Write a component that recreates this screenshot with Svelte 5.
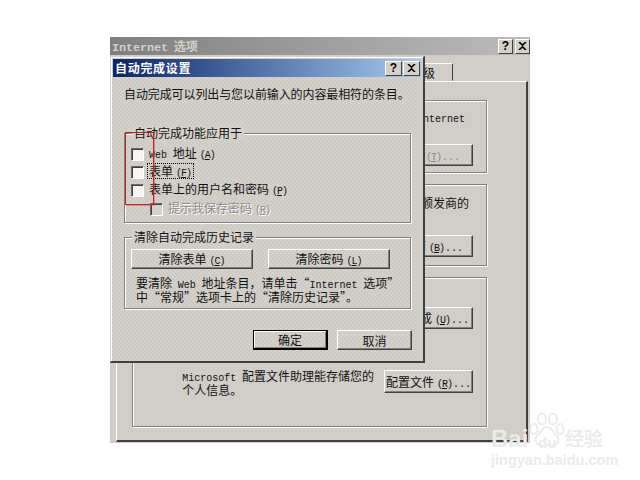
<script>
  // small title-bar button glyph is drawn inline; everything else is plain markup
  const rows = [
    { latin: "Web", text: " 地址", key: "A" },
    { text: "表单", key: "F", focused: true },
    { text: "表单上的用户名和密码", key: "P" }
  ];
</script>

<div class="stage">
  <!-- back window: Internet options -->
  <section class="win back">
    <header class="back-title">
      <span class="back-name"><span class="m-title">Internet</span> 选项</span>
      <div class="caps back-caps">
        <span class="cap">?</span>
        <span class="cap"><svg width="9" height="8" viewBox="0 0 9 8"><path d="M1 0l3.500 3.200L8 0M1 8l3.500-3.200L8 8" fill="none" stroke="#000" stroke-width="1.600"/></svg></span>
      </div>
    </header>
    <div class="tabs"><span class="tab">级</span></div>
    <div class="panel">
      <div class="group g1">
        <p class="t1"><span class="m">nternet</span></p>
        <button class="btn side off" type="button"><span class="k">(<u>T</u>)</span><span class="m">...</span></button>
      </div>
      <div class="group g2">
        <p class="t2">颁发商的</p>
        <button class="btn side bb" type="button">面<span class="k">(<u>B</u>)</span><span class="m">...</span></button>
      </div>
      <div class="group g3">
        <button class="btn side ub" type="button">成<span class="k">(<u>U</u>)</span><span class="m">...</span></button>
        <div class="profile">
          <p><span class="m">Microsoft</span> 配置文件助理能存储您的<br />个人信息。</p>
          <button class="btn prof" type="button">配置文件<span class="k">(<u>R</u>)</span><span class="m">...</span></button>
        </div>
      </div>
    </div>
  </section>

  <!-- front dialog -->
  <section class="win dialog">
    <header class="dlg-title">
      <span class="dlg-name">自动完成设置</span>
      <div class="caps dlg-caps">
        <span class="cap">?</span>
        <span class="cap"><svg width="9" height="8" viewBox="0 0 9 8"><path d="M1 0l3.500 3.200L8 0M1 8l3.500-3.200L8 8" fill="none" stroke="#000" stroke-width="1.600"/></svg></span>
      </div>
    </header>
    <p class="desc">自动完成可以列出与您以前输入的内容最相符的条目。</p>

    <div class="box box1">
      <span class="legend">自动完成功能应用于</span>
      {#each rows as row}
        <label class="row">
          <input type="checkbox" />
          <span class:focused={row.focused}>{#if row.latin}<span class="m">{row.latin}</span>{/if}{row.text}<span class="k">(<u>{row.key}</u>)</span></span>
        </label>
      {/each}
      <label class="row indent">
        <input type="checkbox" disabled />
        <span class="disabled">提示我保存密码<span class="k">(<u>R</u>)</span></span>
      </label>
    </div>

    <div class="box box2">
      <span class="legend">清除自动完成历史记录</span>
      <div class="clear-btns">
        <button class="btn" type="button">清除表单<span class="k">(<u>C</u>)</span></button>
        <button class="btn" type="button">清除密码<span class="k">(<u>L</u>)</span></button>
      </div>
      <p class="hint">要清除 <span class="m">Web</span> 地址条目，请单击“<span class="m">Internet</span> 选项”<br />中“常规”选项卡上的“清除历史记录”。</p>
    </div>

    <div class="actions">
      <button class="btn default" type="button">确定</button>
      <button class="btn" type="button">取消</button>
    </div>
  </section>

  <!-- annotation drawn over the shot -->
  <div class="redbox"></div>

  <!-- watermark -->
  <div class="mark">
    <svg class="paw" width="36" height="36" viewBox="0 0 36 36" fill="none" stroke="currentColor" stroke-width="2">
      <ellipse cx="5" cy="17" rx="3.500" ry="5" />
      <ellipse cx="13" cy="7" rx="4" ry="5.500" />
      <ellipse cx="24" cy="7" rx="4" ry="5.500" />
      <ellipse cx="31" cy="17" rx="3.500" ry="5" />
      <path d="M18 15c-4 0-6 4-8 7-3 2-4 5-3 8 1 3 5 4 11 3 6 1 10 0 11-3 1-3 0-6-3-8-2-3-4-7-8-7z" />
    </svg>
    <span class="bai">Bai</span>
    <span class="du">du</span>
    <span class="jy">经验</span>
    <span class="url">jingyan.baidu.com</span>
  </div>
</div>

<style>
  :global(body) {
    background: #fff;
  }
  * {
    box-sizing: border-box;
  }
  p {
    margin: 0;
  }
  .stage {
    position: relative;
    width: 640px;
    height: 480px;
    overflow: hidden;
    background: #fff;
    font-family: "Noto Sans CJK SC", "Liberation Sans", sans-serif;
    font-size: 12px;
    line-height: 13px;
    word-spacing: 3px;
    color: #111;
  }
  .m,
  .k {
    font-family: "Liberation Mono", monospace;
    font-size: 10px;
    line-height: 0.8;
  }
  .k {
    margin-left: 3px;
    margin-right: 1px;
    letter-spacing: -1px;
  }
  .win {
    position: absolute;
    background-color: #d4d1cb;
    background-image:
      radial-gradient(#cdc9c3 0.7px, transparent 0.8px),
      radial-gradient(#cdc9c3 0.7px, transparent 0.8px);
    background-size: 4px 4px;
    background-position: 0 0, 2px 2px;
  }

  /* back window */
  .back {
    left: 110px;
    top: 37px;
    width: 420px;
    height: 406px;
    display: flex;
    flex-direction: column;
  }
  .back-title {
    height: 18px;
    display: flex;
    align-items: center;
    justify-content: space-between;
    padding-left: 2px;
    background: linear-gradient(90deg, #7f7f7f, #bcbcbc);
    color: #d4d0c8;
    font-weight: bold;
  }
  .m-title {
    font-family: "Liberation Mono", monospace;
    font-size: 11.700px;
    line-height: 0.8;
  }
  .caps {
    display: flex;
  }
  .cap {
    display: flex;
    align-items: center;
    justify-content: center;
    background: #d4d0c8;
    border: 1px solid;
    border-color: #fff #404040 #404040 #fff;
    font-family: "Liberation Sans", sans-serif;
    font-size: 12px;
    font-weight: bold;
    color: #000;
  }
  .back-caps {
    gap: 2px;
  }
  .back-caps .cap {
    width: 15px;
    height: 15px;
  }
  .tabs {
    height: 26px;
    display: flex;
    justify-content: flex-end;
    align-items: flex-end;
    padding-right: 77px;
  }
  .tab {
    width: 60px;
    height: 18px;
    padding: 2px 17px 0 0;
    text-align: right;
    border: 1px solid;
    border-color: #fff #404040 transparent #fff;
    border-radius: 2px 2px 0 0;
  }
  .panel {
    margin-left: 6px;
    width: 412px;
    height: 361px;
    display: flex;
    flex-direction: column;
    gap: 11px;
    padding: 18px 39px 13px 15px;
    border: 1px solid;
    border-color: #fff #404040 #404040 #fff;
    border-width: 1px 2px 2px 1px;
  }
  .group {
    display: flex;
    flex-direction: column;
    align-items: flex-end;
    border: 1px solid #808080;
    box-shadow: 1px 1px 0 #fff, inset 1px 1px 0 #fff;
    padding-right: 13px;
  }
  .g1 {
    height: 73px;
    padding-top: 9px;
  }
  .t1 {
    padding-right: 8px;
    margin-bottom: 20px;
  }
  .g2 {
    height: 82px;
    padding-top: 11px;
  }
  .t2 {
    padding-right: 4px;
    margin-bottom: 26px;
  }
  .g3 {
    flex: 1;
    padding-top: 29px;
  }
  .profile {
    margin-top: 41px;
    display: flex;
    gap: 10px;
    align-items: flex-start;
  }
  .profile p {
    margin-top: -1px;
  }
  .btn {
    padding: 0;
    font: inherit;
    color: inherit;
    text-align: center;
    background: transparent;
    border: 1px solid;
    border-color: #fff #404040 #404040 #fff;
    box-shadow: inset -1px -1px 0 #808080;
    white-space: pre;
    word-spacing: inherit;
  }
  .side {
    width: 100px;
    height: 22px;
    text-align: right;
    padding-right: 12px;
  }
  .bb {
    padding-right: 9px;
  }
  .ub {
    padding-right: 3px;
  }
  .off {
    color: #8a8a8a;
  }
  .prof {
    width: 89px;
    height: 23px;
  }

  /* front dialog */
  .dialog {
    left: 110px;
    top: 56px;
    width: 315px;
    height: 307px;
    padding: 2px 2px 0;
    border: 1px solid;
    border-color: #d4d0c8 #404040 #404040 #d4d0c8;
    border-width: 1px 2px 2px 1px;
    box-shadow: inset 1px 1px 0 #fff;
  }
  .dlg-title {
    height: 18px;
    display: flex;
    align-items: center;
    justify-content: space-between;
    padding: 0 1px 0 2px;
    background: linear-gradient(90deg, #0a246a, #a6caf0);
    color: #fff;
    font-weight: bold;
  }
  .dlg-name {
    margin-bottom: 2px;
    letter-spacing: 0.700px;
  }
  .dlg-caps {
    gap: 1px;
  }
  .dlg-caps .cap {
    width: 17px;
    height: 15px;
  }
  .desc {
    margin: 10px 0 33px 11px;
    white-space: nowrap;
    letter-spacing: -0.100px;
  }
  .box {
    position: relative;
    margin: 0 10px 14px 11px;
    border: 1px solid #808080;
    box-shadow: 1px 1px 0 #fff, inset 1px 1px 0 #fff;
  }
  .box1 {
    height: 90px;
    padding: 11px 0 0 6px;
  }
  .box2 {
    height: 72px;
    padding: 11px 0 0 6px;
  }
  .legend {
    position: absolute;
    left: 7px;
    top: -8px;
    padding: 0 2px;
    background: #d4d1cb;
    white-space: nowrap;
  }
  .row {
    height: 18px;
    display: flex;
    align-items: center;
    gap: 5px;
    white-space: pre;
  }
  .row > span {
    margin-bottom: 2px;
  }
  .row input {
    appearance: none;
    margin: 0;
    width: 13px;
    height: 13px;
    flex: none;
    background: #f6f5f3;
    border: 1px solid;
    border-color: #6a6a6a #fff #fff #6a6a6a;
    box-shadow: inset 1px 1px 0 #404040;
  }
  .row input:disabled {
    background: #d4d1cb;
  }
  .indent {
    margin: 1px 0 0 19px;
  }
  .focused {
    padding: 0 1px;
    margin-left: -1px;
    outline: 1px dotted #000;
  }
  .disabled {
    color: #8a8a8a;
    text-shadow: 1px 1px 0 #fff;
  }
  .clear-btns {
    display: flex;
    gap: 15px;
  }
  .clear-btns .btn {
    width: 122px;
    height: 20px;
  }
  .hint {
    margin: 7px 0 0 5px;
    white-space: nowrap;
  }
  .actions {
    display: flex;
    justify-content: flex-end;
    gap: 9px;
    margin-top: 21px;
    padding-right: 9px;
  }
  .actions .btn {
    width: 75px;
    height: 20px;
  }
  .actions .default {
    border-color: #000;
    border-width: 1px 2px 2px 1px;
    box-shadow: inset 1px 1px 0 #fff, inset -1px -1px 0 #808080;
  }

  .redbox {
    position: absolute;
    left: 125px;
    top: 132px;
    width: 29px;
    height: 73px;
    border: 1px solid #c02024;
    box-shadow: 1px 1px 0 rgba(200, 80, 80, 0.45);
  }

  /* watermark */
  .mark {
    position: absolute;
    left: 490px;
    top: 410px;
    width: 120px;
    height: 58px;
    color: #ebebe9;
    font-family: "Liberation Sans", sans-serif;
    font-weight: bold;
    word-spacing: 0;
  }
  .paw {
    position: absolute;
    left: 39px;
    top: 2px;
  }
  .bai {
    position: absolute;
    left: 1px;
    top: 17px;
    font-size: 24px;
    line-height: 24px;
  }
  .du {
    position: absolute;
    left: 48px;
    top: 25px;
    font-size: 15px;
    line-height: 15px;
  }
  .jy {
    position: absolute;
    left: 75px;
    top: 17px;
    font-family: "Noto Sans CJK SC", sans-serif;
    font-size: 19px;
    line-height: 22px;
  }
  .url {
    position: absolute;
    left: 1px;
    top: 43px;
    font-size: 14.500px;
    line-height: 14px;
    white-space: nowrap;
  }
</style>
